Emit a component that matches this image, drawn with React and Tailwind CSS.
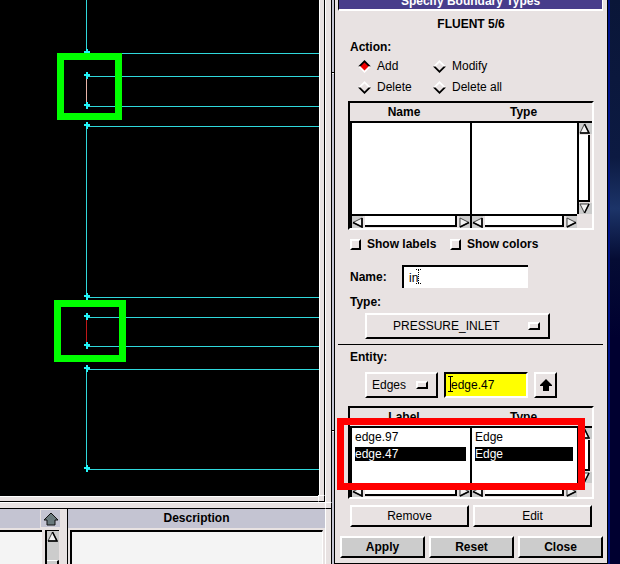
import React from 'react';

const RAISED = 'border-2 border-t-white border-l-white border-b-black border-r-black';
const SUNKEN = 'border-2 border-t-black border-l-black border-b-white border-r-white';

const Node = ({ y }) => (
  <path d={`M84 ${y - 1}h6v2h-6z M86 ${y - 3}h2v7h-2z`} fill="#22f4f8" />
);

const Viewport = () => (
  <div className="min-h-0 flex-1 overflow-hidden bg-black">
    <svg className="block" width="1200" height="496" shapeRendering="crispEdges" aria-label="Mesh view">
      <g stroke="#2fd8dc" strokeWidth="1">
        <path d="M86.5 0V53 M86.5 126V297 M86.5 369V469" />
        {[53, 76, 106, 126, 297, 317, 346, 369, 469].map((y) => (
          <path key={y} d={`M87 ${y + 0.5}H1200`} />
        ))}
      </g>
      <path d="M86.5 77V104" stroke="#e8b4a8" />
      <path d="M86.5 318V345" stroke="#c01818" />
      {[52, 75, 105, 125, 296, 316, 345, 368, 468].map((y) => (
        <Node key={y} y={y} />
      ))}
      <g fill="none" stroke="#00ff00" strokeWidth="7">
        <rect x="60.5" y="56.5" width="58" height="60" />
        <rect x="57.5" y="303.5" width="65" height="55" />
      </g>
    </svg>
  </div>
);

const ARROWS = {
  up: ['M5.5 1L1 10H10', 'M5.5 1L10 10H1'],
  down: ['M1 1H10L5.5 10', 'M10 1L5.5 10'],
  left: ['M10 1L1 5.5L10 10', 'M10 1V10L1 5.5'],
  right: ['M1 1L10 5.5L1 10', 'M1 10L10 5.5'],
};

const ScrollArrow = ({ dir }) => (
  <button type="button" aria-label={`Scroll ${dir}`} className="block shrink-0 bg-[#cccccc]">
    <svg className="block" width="11" height="11" viewBox="0 0 11 11">
      <path d={`${ARROWS[dir][0]}z`} fill="#f2f2f2" stroke="#444" strokeWidth="1" />
      <path d={ARROWS[dir][1]} fill="none" stroke="#000" strokeWidth="1.6" />
    </svg>
  </button>
);

const HScroll = () => (
  <div className="flex h-3 bg-[#e8e2e2]">
    <ScrollArrow dir="left" />
    <div className="mx-0.5 h-[11px] flex-1 border-b-2 border-r-2 border-black bg-white" />
    <ScrollArrow dir="right" />
  </div>
);

const ListTable = ({ columns, rows, selected, bodyClass }) => (
  <div className={`flex ${SUNKEN}`}>
    <div className="min-w-0 flex-1">
      <table className="w-full table-fixed border-separate border-spacing-0">
        <thead>
          <tr>
            <th className="h-5 w-[120px] border-b-2 border-black p-0 pr-3 font-bold leading-4">{columns[0]}</th>
            <th className="h-5 border-b-2 border-black p-0 font-bold leading-4">{columns[1]}</th>
          </tr>
        </thead>
        <tbody className="bg-white">
          {rows.map((row) => (
            <tr key={row[0]}>
              {row.map((cell) => (
                <td key={cell} className="border-l-2 border-black p-0 pb-px pl-[3px] pr-1 pt-0.5">
                  <span className={`block leading-[14px] ${row[0] === selected ? 'bg-black text-white' : ''}`}>{cell}</span>
                </td>
              ))}
            </tr>
          ))}
          <tr>
            <td className={`border-l-2 border-black p-0 ${bodyClass}`} />
            <td className={`border-l-2 border-black p-0 ${bodyClass}`} />
          </tr>
        </tbody>
      </table>
      <div className="flex border-t-2 border-black">
        <div className="w-[120px] border-l-2 border-black">
          <HScroll />
        </div>
        <div className="flex-1 border-l-2 border-black">
          <HScroll />
        </div>
      </div>
    </div>
    <div className="flex w-[15px] flex-col">
      <div className="h-5 shrink-0 border-b-2 border-black" />
      <div className="flex flex-1 flex-col border-l-2 border-black">
        <ScrollArrow dir="up" />
        <div className="my-px w-[11px] flex-1 border-b-2 border-r-2 border-black bg-white" />
        <ScrollArrow dir="down" />
      </div>
      <div className="h-[14px] shrink-0" />
    </div>
  </div>
);

const Radio = ({ label, checked }) => (
  <label className="flex items-center gap-1.5">
    <input type="radio" name="action" defaultChecked={checked} className="sr-only" />
    <svg width="13" height="13" viewBox="0 0 13 13">
      <path d="M0 6.5L6.5 0L13 6.5H9.5L6.5 3.5L3.5 6.5z" fill={checked ? '#000' : '#fff'} />
      <path d="M0 6.5L6.5 13L13 6.5H9.5L6.5 9.5L3.5 6.5z" fill={checked ? '#fff' : '#000'} />
      <path d="M6.5 2.5L10.5 6.5L6.5 10.5L2.5 6.5z" fill={checked ? '#f00000' : '#e8e2e2'} />
    </svg>
    {label}
  </label>
);

const Check = ({ label }) => (
  <label className="flex w-[100px] items-center gap-1.5 whitespace-nowrap font-bold">
    <input type="checkbox" className={`size-[11px] shrink-0 appearance-none bg-[#e8e2e2] ${RAISED}`} />
    {label}
  </label>
);

const OptionMenu = ({ label, value, className, textClass }) => (
  <div className={`relative ${className}`}>
    <select aria-label={label} className={`h-[26px] w-full appearance-none bg-[#e8e2e2] ${RAISED} ${textClass}`}>
      <option>{value}</option>
    </select>
    <span className={`pointer-events-none absolute right-2.5 top-[9px] h-2 w-3 ${RAISED}`} />
  </div>
);

const PushButton = ({ children, className = '' }) => (
  <button type="button" className={`h-[22px] flex-1 leading-4 ${RAISED} ${className}`}>
    {children}
  </button>
);

const BoundaryPanel = () => (
  <form className="flex w-[274px] shrink-0 flex-col border-x border-b border-black bg-[#e8e2e2]">
    <h1 className="ml-[3px] mr-1 flex h-[11px] items-end justify-center border-b-2 border-l border-r border-b-white border-l-black border-r-white bg-[#483d8b] font-bold leading-4 text-white">
      Specify Boundary Types
    </h1>
    <h2 className="mt-[5px] text-center font-bold leading-4">FLUENT 5/6</h2>

    <div className="px-[13px] leading-4">
      <fieldset className="mt-[7px]">
        <legend className="pl-0.5 font-bold">Action:</legend>
        <div className="mt-[3px] grid grid-cols-[75px_1fr] gap-y-[5px] pl-2.5">
          <Radio label="Add" checked />
          <Radio label="Modify" />
          <Radio label="Delete" />
          <Radio label="Delete all" />
        </div>
      </fieldset>

      <div className="mt-1.5">
        <ListTable columns={['Name', 'Type']} rows={[]} bodyClass="h-[91px]" />
      </div>

      <div className="mt-1.5 flex pl-0.5">
        <Check label="Show labels" />
        <Check label="Show colors" />
      </div>

      <div className="mt-[13px] flex items-center pl-0.5">
        <label htmlFor="name" className="w-[52px] font-bold">Name:</label>
        <div className="relative">
          <input
            id="name"
            defaultValue="in"
            className="h-[23px] w-[126px] border-l-2 border-t-2 border-black bg-white pl-[5px]"
          />
          <svg className="pointer-events-none absolute left-3.5 top-1" width="5" height="15" viewBox="0 0 5 15">
            <path d="M0 .5H5M2.5 1V14M0 14.5H5" stroke="#000" strokeDasharray="1 1" />
          </svg>
        </div>
      </div>

      <p className="mt-1.5 pl-0.5 font-bold">Type:</p>
      <OptionMenu label="Type" value="PRESSURE_INLET" className="ml-[17px] mt-[3px] w-[185px]" textClass="pl-[26px]" />
    </div>

    <hr className="ml-[3px] mr-1 mt-[5px] border-t border-black" />

    <div className="px-[13px] leading-4">
      <p className="mt-1 pl-0.5 font-bold">Entity:</p>
      <div className="mt-[7px] flex gap-1.5 pl-[17px]">
        <OptionMenu label="Entity" value="Edges" className="w-[73px]" textClass="pl-[5px]" />
        <div className="relative">
          <input
            aria-label="Selected edge"
            defaultValue="edge.47"
            className={`h-[26px] w-[84px] bg-[#ffff00] pl-[5px] ${SUNKEN}`}
          />
          <svg className="pointer-events-none absolute left-1 top-1" width="5" height="16" viewBox="0 0 5 16" fill="none">
            <path d="M0 .5H5M2.5 1V15M0 15.5H5" stroke="#000" />
          </svg>
        </div>
        <button type="button" aria-label="Pick from list" className={`flex h-[26px] w-[23px] items-center justify-center ${RAISED}`}>
          <svg className="shrink-0" width="12" height="12" viewBox="0 0 12 12">
            <path d="M6 0L12 6V7H9V12H3V7H0V6z" />
          </svg>
        </button>
      </div>

      <div className="relative mt-2">
        <ListTable
          columns={['Label', 'Type']}
          rows={[
            ['edge.97', 'Edge'],
            ['edge.47', 'Edge'],
          ]}
          selected="edge.47"
          bodyClass="h-[21px]"
        />
        <div className="pointer-events-none absolute -left-[11px] right-[9px] top-3 h-[72px] border-[7px] border-[#ff0000]" />
      </div>

      <div className="mt-1.5 flex gap-1 px-0.5">
        <PushButton>Remove</PushButton>
        <PushButton>Edit</PushButton>
      </div>
    </div>

    <div className="mt-[9px] flex gap-1 pl-[5px] pr-1 font-bold">
      <PushButton className="bg-[#cccccc]">Apply</PushButton>
      <PushButton className="bg-[#cccccc]">Reset</PushButton>
      <PushButton className="bg-[#cccccc]">Close</PushButton>
    </div>
  </form>
);

const BottomPanes = () => (
  <div className="flex h-14 shrink-0 border-t border-black bg-[#e8e2e2]">
    <section className="flex w-[67px] shrink-0 flex-col">
      <div className="flex h-[19px] bg-[#c4c4d2]">
        <div className="flex-1" />
        <button type="button" aria-label="Expand" className="flex w-[21px] items-center justify-center border border-[#e8e2e2]">
          <svg className="shrink-0" width="16" height="14" viewBox="0 0 16 14">
            <path d="M8 1L15 8H12V13H4V8H1z" fill="#69797c" stroke="#111" />
          </svg>
        </button>
        <div className="w-1.5 bg-[#e8e2e2]" />
      </div>
      <div className="mt-0.5 flex flex-1">
        <div className="w-[42px] border-t-2 border-black bg-[#f4f4f4]" />
        <div className="ml-[3px] flex w-[14px] flex-col justify-between border-l-2 border-t border-black bg-[#cccccc]">
          <ScrollArrow dir="up" />
          <div className="h-1 border-r-2 border-t border-black border-t-white bg-[#cccccc]" />
        </div>
      </div>
    </section>
    <section className="flex flex-1 flex-col border-l border-black">
      <h2 className="h-[19px] bg-[#c4c4d2] text-center font-bold leading-[18px]">Description</h2>
      <div className="mx-0.5 mt-0.5 flex-1 border-l-2 border-r border-t-2 border-black border-r-white bg-[#f4f4f4]" />
    </section>
  </div>
);

const SASH = 'absolute z-10 size-[7px] border border-t-white border-l-white border-b-black border-r-black bg-[#e8e2e2]';

export default function App() {
  return (
    <main className="flex h-screen min-h-[564px] overflow-hidden bg-[#e8e2e2] font-['Liberation_Sans',Arial,sans-serif] text-[12px] text-black">
      <div className="relative flex min-w-0 flex-1 flex-col">
        <div className="flex min-h-0 flex-1">
          <Viewport />
          <div className="w-[5px] border-l border-white" />
          <div className="w-px bg-black" />
        </div>
        <div className="h-[5px] shrink-0 border-t border-white" />
        <div className="h-px shrink-0 bg-black" />
        <div className="h-1.5 shrink-0 border-t border-white" />
        <BottomPanes />
        <div className={`${SASH} bottom-[62px] right-0`} />
        <div className={`${SASH} -right-[7px] bottom-[55px]`} />
      </div>
      <div className="w-1.5 shrink-0 border-l border-white" />
      <div className="flex w-[3px] shrink-0 flex-col border-l border-black bg-[#c4c4d2]">
        <div className="h-[73px] border-b border-black" />
        <div className="h-[358px] border-b border-t border-b-black border-t-white" />
        <div className="flex-1 border-t border-white" />
      </div>
      <BoundaryPanel />
      <div className="w-3 shrink-0 border-l-2 border-[#00148c] bg-[linear-gradient(180deg,#0a1638_0%,#0c1a42_28%,#1c3468_37%,#050c34_46%,#000030_60%,#000030_100%)]" />
    </main>
  );
}
